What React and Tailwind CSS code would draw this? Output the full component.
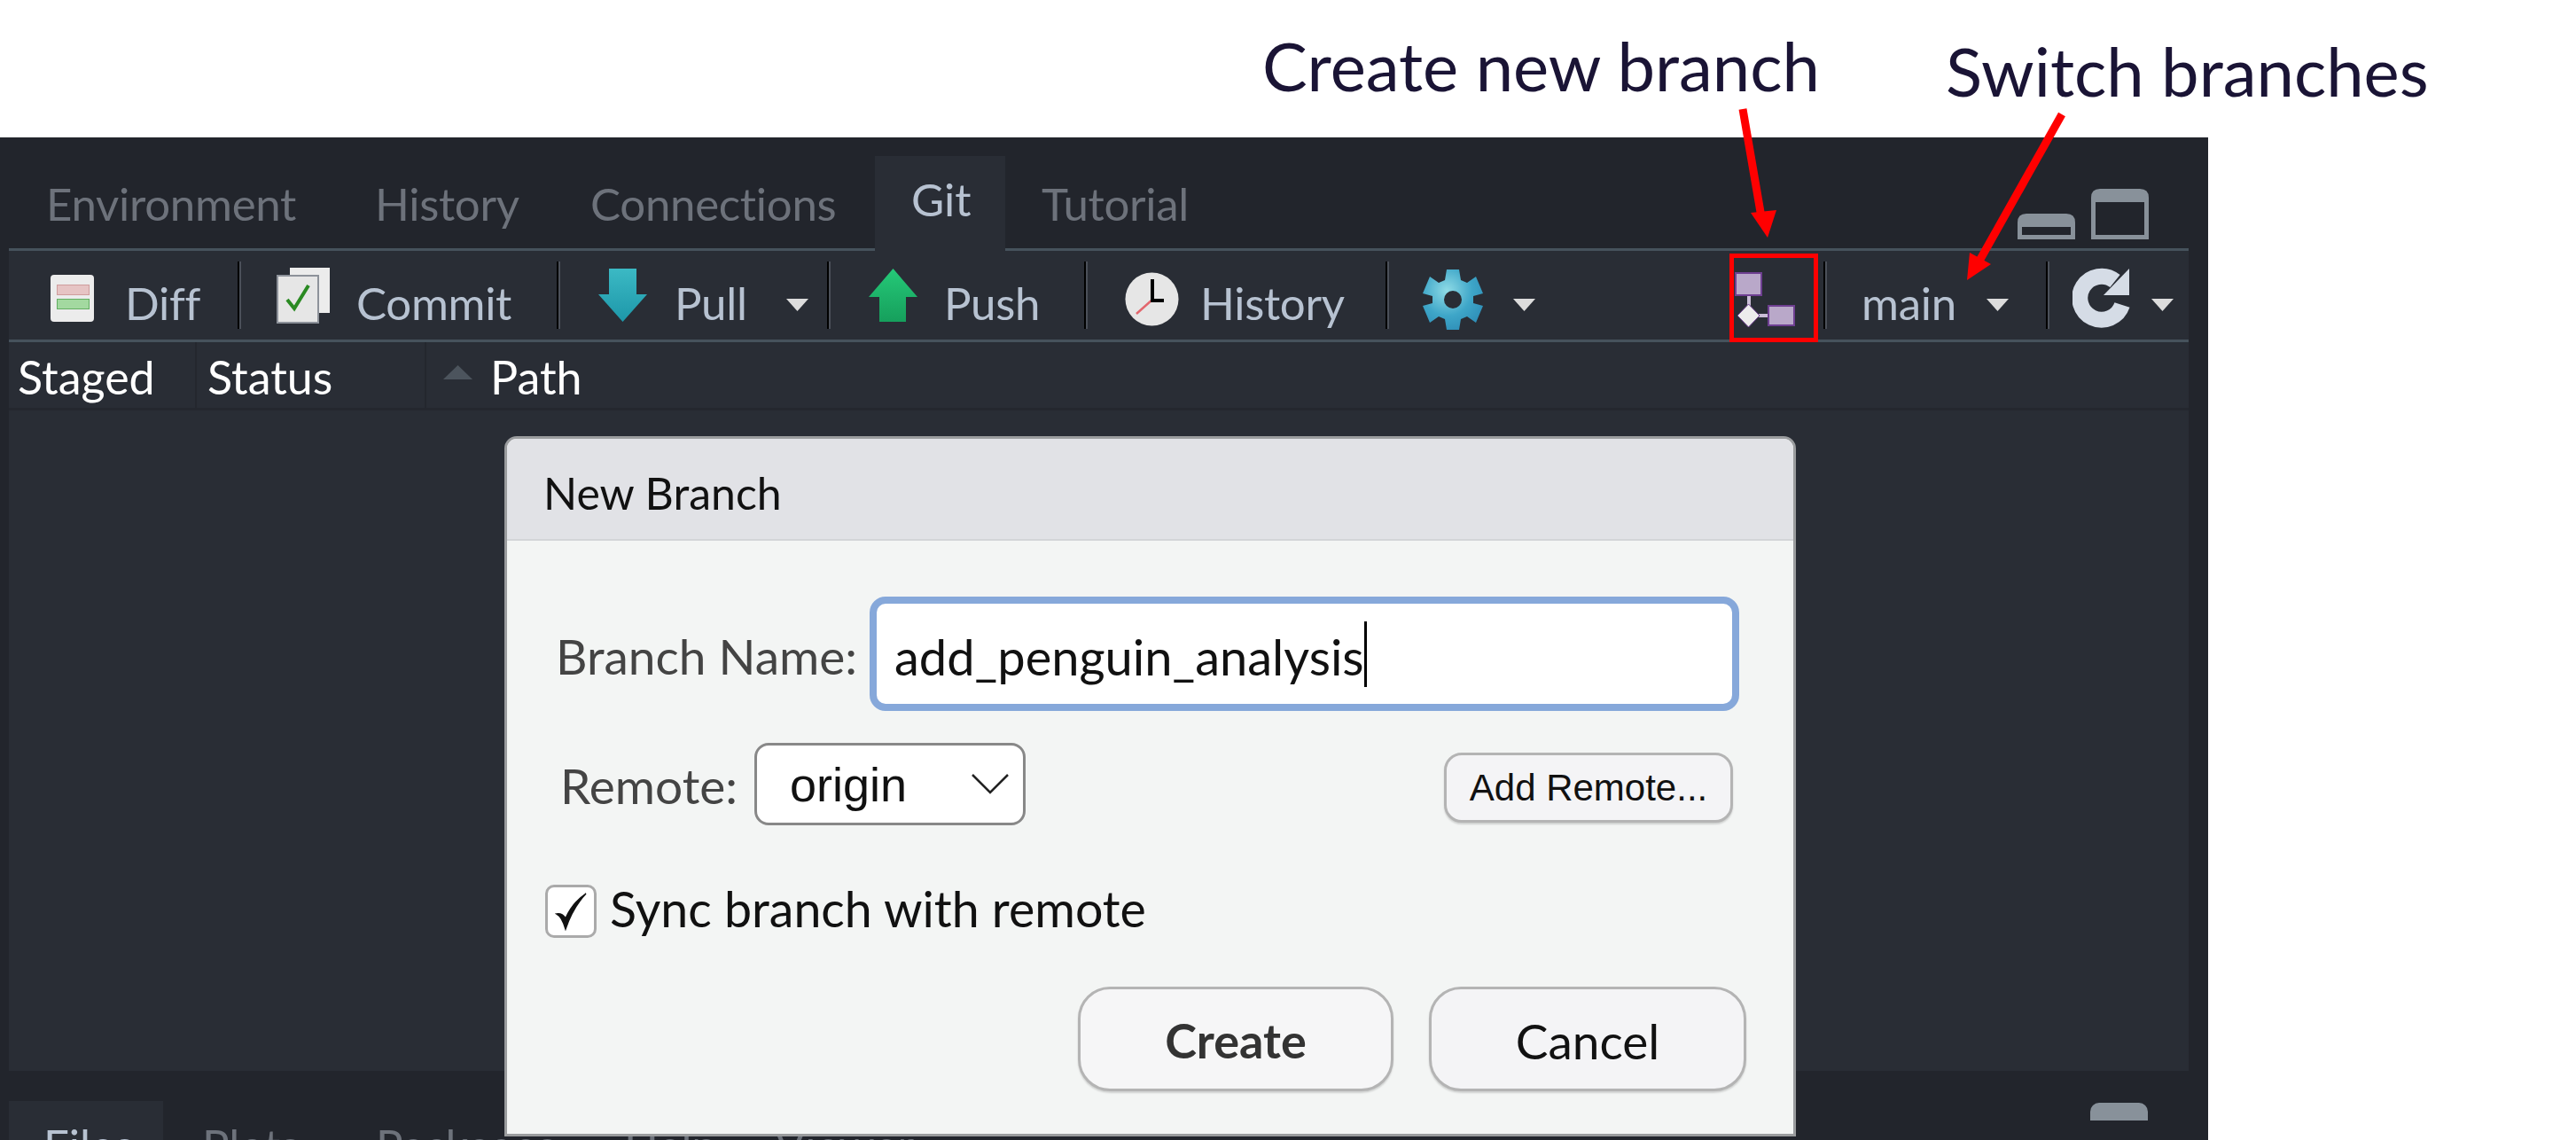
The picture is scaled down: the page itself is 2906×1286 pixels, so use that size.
import React from "react";

const Separator = () => (
  <div className="h-[76px] w-[4px] flex-none border-l-2 border-r-2 border-l-black border-r-[#4b5059]" />
);

const Caret = ({ className = "" }) => (
  <svg width="25" height="14" viewBox="0 0 25 14" className={`flex-none mt-[21px] ${className}`}>
    <path d="M0 0H25L12.5 14Z" fill="#dcdcdc" />
  </svg>
);

const DiffIcon = () => (
  <svg width="49" height="53" viewBox="0 0 49 53" className="flex-none mt-[7px]">
    <rect width="49" height="53" rx="4" fill="#ececec" />
    <rect x="7.5" y="11.5" width="36" height="11" fill="#e6c4c4" stroke="#cf9d9d" />
    <rect x="7.5" y="27.5" width="36" height="11" fill="#a3d9a0" stroke="#62ae62" />
  </svg>
);

const CommitIcon = () => (
  <svg width="60" height="63" viewBox="0 0 60 63" className="flex-none">
    <rect x="15" width="45" height="51" fill="#ececec" />
    <rect x="1" y="9" width="46" height="53" fill="#e6e6e6" stroke="#8d929a" strokeWidth="2" />
    <path d="M12 36L20 46L36 20" fill="none" stroke="#2a8a22" strokeWidth="4" />
  </svg>
);

const PullIcon = () => (
  <svg width="55" height="60" viewBox="0 0 55 60" className="flex-none">
    <defs>
      <linearGradient id="pull" x1="0" y1="0" x2="0" y2="1">
        <stop offset="0" stopColor="#3bb9c4" />
        <stop offset="1" stopColor="#1d97a9" />
      </linearGradient>
    </defs>
    <path d="M12 0H43V29H55L27.5 60L0 29H12Z" fill="url(#pull)" />
  </svg>
);

const PushIcon = () => (
  <svg width="55" height="60" viewBox="0 0 55 60" className="flex-none">
    <defs>
      <linearGradient id="push" x1="0" y1="0" x2="0" y2="1">
        <stop offset="0" stopColor="#25c978" />
        <stop offset="1" stopColor="#169f5c" />
      </linearGradient>
    </defs>
    <path d="M27.5 0L55 32H42V60H12V32H0Z" fill="url(#push)" />
  </svg>
);

const ClockIcon = () => (
  <svg width="61" height="61" viewBox="0 0 61 61" className="flex-none mt-[8px]">
    <circle cx="30.5" cy="30.5" r="30" fill="#e6e6e6" />
    <path d="M31 31L13 47" stroke="#e2666d" strokeWidth="2.5" />
    <path d="M31 8V32H44" fill="none" stroke="#000" strokeWidth="4" />
  </svg>
);

const GearIcon = () => (
  <svg width="68" height="68" viewBox="0 0 68 68" className="flex-none mt-[10px]">
    <defs>
      <radialGradient id="gear" cx="0.4" cy="0.35" r="0.7">
        <stop offset="0" stopColor="#8fdbe6" />
        <stop offset="0.6" stopColor="#3ea6c8" />
        <stop offset="1" stopColor="#2f8fb8" />
      </radialGradient>
    </defs>
    <path d="M27 0H41L43 12L50 15L60 8L68 27L57 30V38L68 41L60 60L50 53L43 56L41 68H27L25 56L18 53L8 60L0 41L11 38V30L0 27L8 8L18 15L25 12Z" fill="url(#gear)" />
    <circle cx="34" cy="34" r="10" fill="#292d35" />
  </svg>
);

const BranchIcon = () => (
  <svg width="68" height="62" viewBox="0 0 68 62" className="flex-none mt-[10px]">
    <path d="M16 25V38M27 49H38" stroke="#c9bdd6" strokeWidth="4" />
    <rect x="1" y="1" width="29" height="25" fill="#b9a8c9" stroke="#6e3f91" strokeWidth="2" />
    <path d="M15.5 36L28 49L15.5 62L3 49Z" fill="#ececec" stroke="#6e3f91" strokeWidth="1" />
    <rect x="38" y="38" width="29" height="22" fill="#b9a8c9" stroke="#6e3f91" strokeWidth="2" />
  </svg>
);

const RefreshIcon = () => (
  <svg width="67" height="68" viewBox="0 0 67 68" className="flex-none mt-[6px]">
    <path d="M56 42A24.5 24.5 0 1 1 48 15" fill="none" stroke="#d5dce6" strokeWidth="18" />
    <path d="M64 1V31H35Z" fill="#d5dce6" />
  </svg>
);

const MinimizeIcon = () => (
  <svg width="65" height="29" viewBox="0 0 65 29" className="flex-none">
    <path d="M0 29V10Q0 0 10 0H55Q65 0 65 10V29ZM5 15V24H60V15Z" fill="#88919a" fillRule="evenodd" />
  </svg>
);

const MaximizeIcon = () => (
  <svg width="65" height="57" viewBox="0 0 65 57" className="flex-none">
    <path d="M0 57V10Q0 0 10 0H55Q65 0 65 10V57ZM5 15V52H60V15Z" fill="#88919a" fillRule="evenodd" />
  </svg>
);

const toolText = "text-[51px] leading-none tracking-[-0.3px] mt-[16px] text-[#b7c2d1] whitespace-nowrap";
const tabText = "text-[51px] leading-none tracking-[-0.3px] text-[#6d727b] whitespace-nowrap";
const headText = "text-[52px] leading-none text-white whitespace-nowrap";

export default function App() {
  return (
    <div className="relative w-[2906px] h-[1286px] overflow-hidden bg-white font-['Lato',sans-serif]">
      <header className="h-[155px] flex text-[#1a1435] text-[76px] leading-none whitespace-nowrap">
        <div className="ml-[1424px] mt-[36px] w-[771px]">Create new branch</div>
        <div className="mt-[42px]">Switch branches</div>
      </header>

      <main className="w-[2491px] h-[1131px] bg-[#22252c] flex flex-col pl-[10px] pr-[22px]">
        <div className="h-[128px] flex items-end flex-none">
          <div className="w-[977px] h-full flex items-center pt-[24px] border-b-[3px] border-[#46525c]">
            <div className={`${tabText} w-[413px] pl-[42px]`}>Environment</div>
            <div className={`${tabText} w-[243px]`}>History</div>
            <div className={tabText}>Connections</div>
          </div>
          <div className="w-[147px] h-[107px] bg-[#292d35] pl-[41px] pt-[23px] flex-none">
            <div className="text-[51px] leading-none text-[#b7c2d1]">Git</div>
          </div>
          <div className="flex-1 h-full flex items-center pt-[24px] pl-[41px] border-b-[3px] border-[#46525c]">
            <div className={tabText}>Tutorial</div>
            <div className="ml-auto mr-[45px] mb-[10px] self-end flex items-end gap-[18px]">
              <MinimizeIcon />
              <MaximizeIcon />
            </div>
          </div>
        </div>

        <div className="h-[103px] flex-none flex items-center bg-[#292d35] border-b-[3px] border-[#46525c]">
          <div className="w-[258px] pl-[47px] flex items-center gap-[35px]">
            <DiffIcon />
            <span className={toolText}>Diff</span>
          </div>
          <Separator />
          <div className="w-[356px] pl-[40px] flex items-center gap-[30px]">
            <CommitIcon />
            <span className={toolText}>Commit</span>
          </div>
          <Separator />
          <div className="w-[301px] pl-[43px] flex items-center gap-[31px]">
            <PullIcon />
            <span className={toolText}>Pull</span>
            <Caret className="ml-auto mr-[21px]" />
          </div>
          <Separator />
          <div className="w-[286px] pl-[43px] flex items-center gap-[30px]">
            <PushIcon />
            <span className={toolText}>Push</span>
          </div>
          <Separator />
          <div className="w-[336px] pl-[42px] flex items-center gap-[24px]">
            <ClockIcon />
            <span className={toolText}>History</span>
          </div>
          <Separator />
          <div className="pl-[38px] flex items-center gap-[34px]">
            <GearIcon />
            <Caret />
          </div>
          <div className="ml-auto flex items-center">
            <BranchIcon />
            <div className="w-[32px]" />
            <Separator />
            <div className="w-[247px] pl-[39px] flex items-center">
              <span className={toolText}>main</span>
              <Caret className="ml-auto mr-[42px]" />
            </div>
            <Separator />
            <div className="pl-[26px] pr-[17px] flex items-center gap-[22px]">
              <RefreshIcon />
              <Caret />
            </div>
          </div>
        </div>

        <div className="h-[77px] flex-none flex items-center bg-[#292d35] border-b-[3px] border-[#24272e]">
          <div className={`${headText} w-[212px] h-full flex items-center pl-[10px] pt-[4px] border-r-2 border-[#24272e]`}>Staged</div>
          <div className={`${headText} w-[259px] h-full flex items-center pl-[12px] pt-[4px] border-r-2 border-[#24272e]`}>Status</div>
          <div className="flex items-center pl-[19px] gap-[20px]">
            <svg width="33" height="16" viewBox="0 0 33 16" className="mb-[6px]"><path d="M16.5 0L33 16H0Z" fill="#4c545d" /></svg>
            <span className={`${headText} pt-[4px]`}>Path</span>
          </div>
        </div>

        <div className="flex-1 bg-[#292d35]" />

        <div className="h-[78px] flex-none flex items-start pt-[34px]">
          <div className="w-[174px] h-[44px] bg-[#292d35] pl-[39px] pt-[24px] text-[51px] leading-none text-[#b7c2d1]">Files</div>
          <div className={`${tabText} ml-[44px] pt-[24px] w-[196px]`}>Plots</div>
          <div className={`${tabText} pt-[24px] w-[280px]`}>Packages</div>
          <div className={`${tabText} pt-[24px] w-[170px]`}>Help</div>
          <div className={`${tabText} pt-[24px]`}>Viewer</div>
          <div className="ml-auto mr-[46px] mt-[2px] w-[65px] h-[20px] rounded-t-[10px] bg-[#88919a]" />
        </div>
      </main>

      {/* annotation overlay */}
      <svg width="2906" height="1286" viewBox="0 0 2906 1286" className="absolute inset-0 pointer-events-none">
        <path d="M1966 123L1987 245" stroke="#ff0000" strokeWidth="9" />
        <path d="M1994 268L1975 240L2004 237Z" fill="#ff0000" />
        <path d="M2326 129L2232 296" stroke="#ff0000" strokeWidth="9" />
        <path d="M2219 316L2222 285L2246 298Z" fill="#ff0000" />
        <rect x="1953.5" y="288.5" width="95" height="95" fill="none" stroke="#ff0000" strokeWidth="5" />
      </svg>

      <div className="absolute left-[569px] top-[492px] w-[1457px] h-[790px] flex flex-col rounded-t-[14px] border-[3px] border-[#9a9c9e] overflow-hidden bg-[#f3f5f4] text-[55px] leading-none">
        <div className="h-[115px] flex-none flex items-center pl-[41px] pt-[8px] bg-[#e1e2e6] border-b-2 border-[#d3d5d8] text-[50px] text-[#111]">New Branch</div>

        <div className="mt-[63px] h-[129px] flex items-center pl-[55px]">
          <div className="w-[354px] mt-[6px] text-[#444]">Branch Name:</div>
          <div className="w-[981px] h-[129px] flex items-center pl-[20px] pt-[6px] bg-white rounded-[18px] border-[8px] border-[#86a8da] text-[56px] text-[#111]">
            add_penguin_analysis
            <div className="w-[3px] h-[74px] mb-[6px] bg-black" />
          </div>
        </div>

        <div className="mt-[36px] h-[93px] flex items-center pl-[60px]">
          <div className="w-[219px] mt-[4px] text-[#444]">Remote:</div>
          <div className="w-[306px] h-[93px] flex items-center justify-between pl-[37px] pr-[16px] bg-white rounded-[16px] border-[3px] border-[#888] font-['Liberation_Sans',sans-serif] text-[54px] text-[#111]">
            origin
            <svg width="42" height="23" viewBox="0 0 42 23"><path d="M1 1L21 21L41 1" fill="none" stroke="#222" strokeWidth="2.5" /></svg>
          </div>
          <button className="ml-auto mr-[68px] mt-[8px] w-[326px] h-[79px] rounded-[20px] bg-[#f4f4f6] border-[3px] border-[#b4b4b4] shadow-[0_2px_2px_rgba(0,0,0,0.15)] font-['Liberation_Sans',sans-serif] text-[42px] text-[#111]">
            Add Remote...
          </button>
        </div>

        <div className="mt-[67px] h-[60px] flex items-center pl-[43px] gap-[15px] text-[55.5px] text-[#111]">
          <div className="w-[58px] h-[60px] flex items-center justify-center bg-white rounded-[10px] border-[3px] border-[#aaa]">
            <svg width="36" height="44" viewBox="0 0 36 44"><path d="M2 25Q8 28 12 42Q20 18 35 2Q20 12 12 30Q8 24 2 25Z" fill="#111" stroke="#111" strokeWidth="1.5" /></svg>
          </div>
          <span className="mb-[6px]">Sync branch with remote</span>
        </div>

        <div className="mt-[55px] flex justify-end pr-[53px] gap-[40px]">
          <button className="w-[356px] h-[118px] pt-[4px] rounded-[36px] bg-[#f6f6f7] border-[3px] border-[#b4b4b4] shadow-[0_2px_2px_rgba(0,0,0,0.15)] font-bold text-[54px] text-[#333]">Create</button>
          <button className="w-[358px] h-[118px] pt-[4px] rounded-[36px] bg-[#f4f4f6] border-[3px] border-[#b4b4b4] shadow-[0_2px_2px_rgba(0,0,0,0.15)] text-[#111]">Cancel</button>
        </div>
      </div>
    </div>
  );
}
